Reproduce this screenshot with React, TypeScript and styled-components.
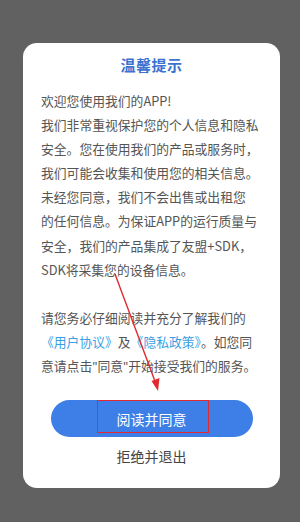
import React from 'react';
import styled, { createGlobalStyle } from 'styled-components';

const GlobalStyle = createGlobalStyle`
  html, body {
    margin: 0;
    padding: 0;
    background: #616161;
  }
  body {
    font-family: "Noto Sans CJK SC", "Noto Sans", sans-serif;
  }
`;

const Screen = styled.div`
  position: relative;
  width: 300px;
  height: 522px;
  background: #616161;
  padding: 43px 20px 0 23px;
  box-sizing: border-box;
  overflow: hidden;
`;

const Card = styled.div`
  background: #fff;
  border-radius: 14px;
  width: 257px;
  padding: 11px 0 22px;
  box-sizing: border-box;
  display: flex;
  flex-direction: column;
  align-items: center;
`;

const Title = styled.div`
  font-size: 15px;
  line-height: 22px;
  font-weight: 700;
  color: #3d72d1;
  letter-spacing: 0.5px;
`;

const Body = styled.div`
  align-self: stretch;
  margin-top: 13px;
  padding: 0 0 0 18px;
  font-size: 12.8px;
  line-height: 24.1px;
  color: #555;
`;

const Line = styled.div`
  white-space: nowrap;
  height: 24.1px;
`;

const Link = styled.span`
  color: #3a9fe3;
`;

const Quote = styled.span`
  font-family: "Noto Sans", sans-serif;
`;

const AgreeButton = styled.button`
  margin-top: 22px;
  width: 202px;
  height: 37px;
  border: none;
  border-radius: 19px;
  background: #3d7fe6;
  color: #fff;
  font-family: inherit;
  font-size: 14px;
  padding: 0;
  cursor: pointer;
`;

const DeclineButton = styled.button`
  margin-top: 9px;
  border: none;
  background: none;
  padding: 0;
  font-family: inherit;
  font-size: 14px;
  line-height: 20px;
  color: #444;
  cursor: pointer;
`;

const Highlight = styled.div`
  position: absolute;
  left: 97px;
  top: 400px;
  width: 112px;
  height: 33px;
  border: 1.5px solid #e02a2f;
  box-sizing: border-box;
  pointer-events: none;
`;

const Arrow = styled.svg`
  position: absolute;
  left: 0;
  top: 0;
  pointer-events: none;
`;

const lines: React.ReactNode[] = [
  '欢迎您使用我们的APP!',
  '我们非常重视保护您的个人信息和隐私',
  '安全。您在使用我们的产品或服务时，',
  '我们可能会收集和使用您的相关信息。',
  '未经您同意，我们不会出售或出租您',
  '的任何信息。为保证APP的运行质量与',
  '安全，我们的产品集成了友盟+SDK，',
  'SDK将采集您的设备信息。',
  '',
  '请您务必仔细阅读并充分了解我们的',
  <>
    <Link>《用户协议》</Link>及<Link>《隐私政策》</Link>。如您同
  </>,
  <>
    意请点击<Quote>"</Quote>同意<Quote>"</Quote>开始接受我们的服务。
  </>,
];

const App: React.FC = () => {
  return (
    <>
      <GlobalStyle />
      <Screen>
        <Card>
          <Title>温馨提示</Title>
          <Body>
            {lines.map((l, i) => (
              <Line key={i}>{l}</Line>
            ))}
          </Body>
          <AgreeButton>阅读并同意</AgreeButton>
          <DeclineButton>拒绝并退出</DeclineButton>
        </Card>
        <Highlight />
        <Arrow width="300" height="522" viewBox="0 0 300 522">
          <line x1="115" y1="274" x2="156" y2="384" stroke="#e02a2f" strokeWidth="1.4" />
          <polygon points="158,391 151.5,381 159.5,378" fill="#e02a2f" />
        </Arrow>
      </Screen>
    </>
  );
};

export default App;
